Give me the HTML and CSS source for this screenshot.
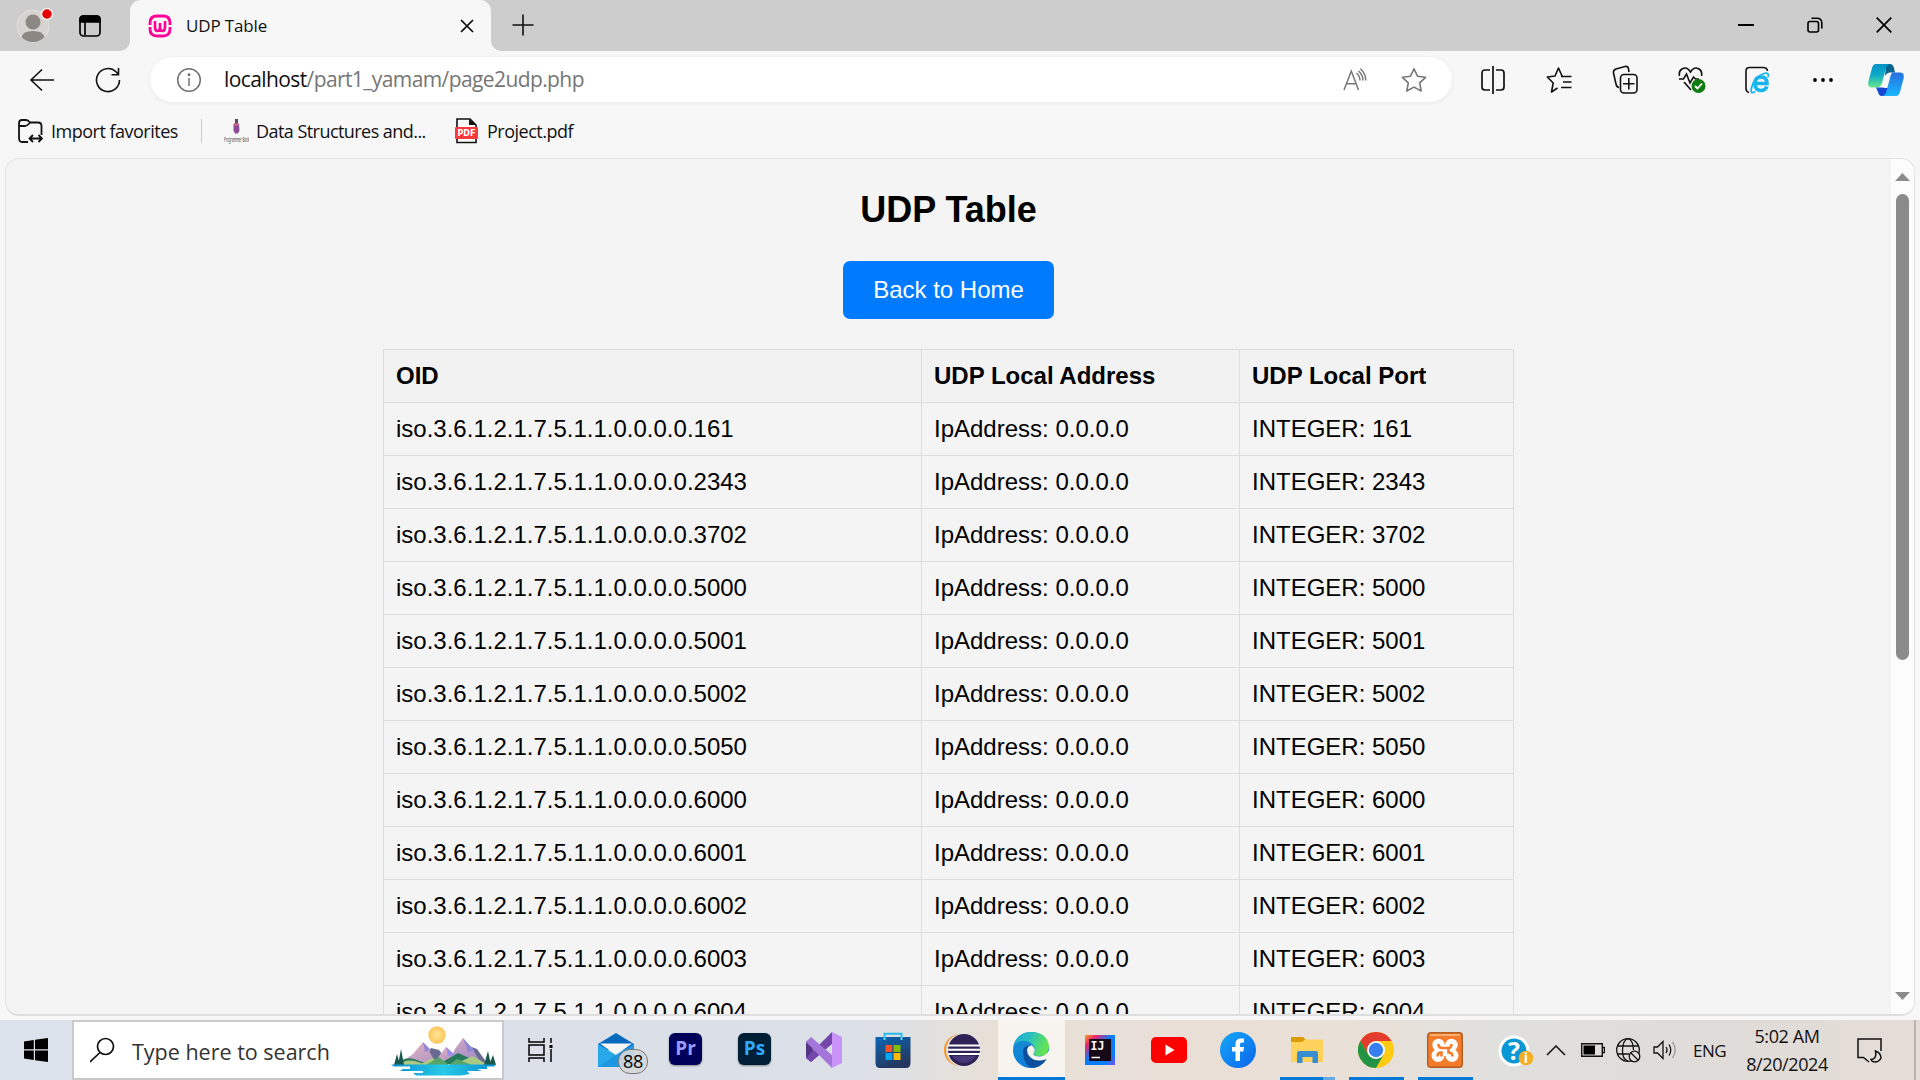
FILE: index.html
```html
<!DOCTYPE html>
<html lang="en">
<head>
<meta charset="utf-8">
<title>UDP Table</title>
<link rel="stylesheet" href="styles.css">
</head>
<body>
<div class="screen">
  <header class="titlebar">
    <div class="profile">
      <svg width="38" height="40" viewBox="0 0 38 40"><circle cx="17" cy="22" r="16" fill="#d6d4d0" stroke="#e4e2de"/><circle cx="17" cy="18" r="7.5" fill="#8b8884"/><path d="M5.500 33 Q7 27 17 27 Q27 27 28.500 33 Q24 38 17 38 Q10 38 5.500 33Z" fill="#8b8884"/><circle cx="31" cy="10" r="5.500" fill="#e60000" stroke="#eee" stroke-width="1.500"/></svg>
    </div>
    <div class="tab-actions">
      <svg width="24" height="24" viewBox="0 0 24 24" fill="none" stroke="#000" stroke-width="1.700"><rect x="2" y="2" width="20" height="20" rx="3.500"/><path d="M7 8V21"/><path d="M2 8V5Q2 2 5 2H19Q22 2 22 5V8Z" fill="#000"/></svg>
    </div>
    <div class="tab">
      <svg class="favicon" width="24" height="24" viewBox="0 0 24 24" fill="none" stroke="#f09" stroke-width="2.800"><path d="M2 11V9Q2 2 9 2H15Q22 2 22 9V11M22 13V15Q22 22 15 22H9Q2 22 2 15V13"/><path d="M7 7V13Q7 17 9.500 17Q12 17 12 13V9V13Q12 17 14.500 17Q17 17 17 13V7" stroke-width="2.600"/></svg>
      <span class="tab-title">UDP Table</span>
      <svg class="tab-close" width="14" height="14" viewBox="0 0 14 14" fill="none" stroke="#000" stroke-width="1.600"><path d="M1 1 13 13M13 1 1 13"/></svg>
    </div>
    <svg class="new-tab" width="22" height="22" viewBox="0 0 22 22" fill="none" stroke="#111" stroke-width="1.600"><path d="M11 0.500V21.500M0.500 11H21.500"/></svg>
    <div class="window-controls">
      <div><svg width="16" height="16" viewBox="0 0 16 16"><path d="M0 8H16" stroke="#000" stroke-width="2"/></svg></div>
      <div><svg width="16" height="16" viewBox="0 0 16 16" fill="none" stroke="#000" stroke-width="1.600"><rect x="1" y="4.500" width="10.500" height="10.500" rx="2"/><path d="M4.500 1.200H10Q14.800 1.200 14.800 6V11.500"/></svg></div>
      <div><svg width="16" height="16" viewBox="0 0 16 16" fill="none" stroke="#000" stroke-width="1.700"><path d="M.7 .7 15.300 15.300M15.300 .7 .7 15.300"/></svg></div>
    </div>
  </header>

  <nav class="toolbar">
    <div class="tool"><svg width="26" height="24" viewBox="0 0 26 24" fill="none" stroke="#111" stroke-width="1.600"><path d="M13 1.500 2 12 13 22.500M2 12H25"/></svg></div>
    <div class="tool"><svg width="26" height="26" viewBox="0 0 26 26" fill="none" stroke="#111" stroke-width="1.600"><path d="M24.500 13A11.500 11.500 0 1 1 21 4.800L23.500 7.500M23.500 1V7.800H16.500"/></svg></div>
    <div class="address">
      <svg class="info" width="26" height="26" viewBox="0 0 26 26" fill="none" stroke="#707070" stroke-width="1.500"><circle cx="13" cy="13" r="11.300"/><path d="M13 11V19"/><circle cx="13" cy="7.800" r=".7" fill="#707070"/></svg>
      <span class="url"><span class="host">localhost</span>/part1_yamam/page2udp.php</span>
      <svg class="read" width="24" height="24" viewBox="0 0 24 24" fill="none" stroke="#777" stroke-width="1.500"><path d="M1 22 8.300 3 15.500 22M3.500 15.800H13M13.500 5Q17 8 17 12.500M17.500 .8Q22.800 6 22.800 12.500M15.500 3Q20 7 20 12.500"/></svg>
      <svg class="star" width="26" height="26" viewBox="0 0 26 26" fill="none" stroke="#777" stroke-width="1.600" stroke-linejoin="round"><path d="M13 1.800 16.500 9.200 24.600 10.300 18.700 15.900 20.200 24 13 20.100 5.800 24 7.300 15.900 1.400 10.300 9.500 9.200Z"/></svg>
    </div>
    <div class="tools">
      <div class="tool"><svg width="24" height="28" viewBox="0 0 24 28" fill="none" stroke="#111" stroke-width="1.700"><path d="M9 4H4Q1 4 1 7V21Q1 24 4 24H9M15 4H20Q23 4 23 7V21Q23 24 20 24H15M12 0V28"/></svg></div>
      <div class="tool"><svg width="26" height="28" viewBox="0 0 26 28" fill="none" stroke="#111" stroke-width="1.600" stroke-linejoin="round"><path d="M17 10H16L12.500 2 9 10 1.300 11 7.200 17 5.500 26 11.500 22M15 10.500H25.500M17 16H25.500M15 21.500H25.500"/></svg></div>
      <div class="tool"><svg width="26" height="30" viewBox="0 0 26 30" fill="none" stroke="#111" stroke-width="1.600"><path d="M7 22.500Q4.500 22 4 19L1.500 8Q1 5 4 4L13 1.500Q16 1 16.500 4L17 7"/><rect x="8.500" y="9.500" width="16.500" height="18.500" rx="3.500"/><path d="M16.800 13V24.500M11 18.800H22.500"/></svg></div>
      <div class="tool health"><svg width="28" height="30" viewBox="0 0 28 30" fill="none" stroke="#111" stroke-width="1.600"><path d="M1.500 11Q.5 6 4 4Q9 1 12.500 7Q16 1 21 4Q24.500 6 23.500 11M6 17 13 25M1 14H5.500L8.500 9 12 18 15.500 12 17.500 14H21"/><circle cx="20.500" cy="21" r="7" fill="#107c10" stroke="none"/><path d="M17 21 19.500 23.500 24 18.500" stroke="#fff" stroke-width="1.800"/></svg></div>
      <div class="tool"><svg width="26" height="28" viewBox="0 0 26 28" fill="none"><path d="M5 26.500Q2 25.500 2 22.500V5Q2 1.500 5.500 1.500H19Q23 1.500 23.500 5" stroke="#111" stroke-width="1.600"/><path d="M23 20.500Q21 25 16.500 24.500Q11 24 11 17.500Q11 11 17 11Q23 11 23 17.500H12" stroke="#18b4ee" stroke-width="3.600"/><path d="M11 25.500Q6 29 7.500 22Q10 11 20 7.500Q25.500 6 24 11" stroke="#18b4ee" stroke-width="1.800"/></svg></div>
      <div class="tool"><svg width="20" height="6" viewBox="0 0 20 6"><circle cx="2" cy="3" r="1.900"/><circle cx="10" cy="3" r="1.900"/><circle cx="18" cy="3" r="1.900"/></svg></div>
      <div class="tool copilot"><svg width="36" height="34" viewBox="0 0 36 34"><defs><linearGradient id="cg" x1="0" y1="0" x2="0" y2="1"><stop offset="0" stop-color="#0793c8"/><stop offset=".45" stop-color="#09a9ca"/><stop offset="1" stop-color="#67e68c"/></linearGradient><linearGradient id="cb" x1="0" y1="0" x2="0" y2="1"><stop offset="0" stop-color="#2770df"/><stop offset="1" stop-color="#18b6fd"/></linearGradient></defs><path d="M18 1H22Q25 1 26 5L27 9.500H22Q19 9.500 17 13Z" fill="#0b6490"/><path d="M8 1H22Q19 1 18 5L14 20Q12.500 24.500 9 24.500H4Q-1 24.500 .5 18L4 5Q5 1 8 1Z" fill="url(#cg)"/><path d="M8 24.500H14L17 25H20L18.500 30Q17.500 33 15 33H13.500Q11 33 10 29Z" fill="#1746d4"/><path d="M25 9.500H32Q37 9.500 35.500 16L32 29Q31 33 28 33H14Q17 33 18.500 28L22.500 13Q23.500 9.500 25 9.500Z" fill="url(#cb)"/></svg></div>
    </div>
  </nav>

  <nav class="favorites">
    <svg class="import" width="25" height="26" viewBox="0 0 25 26" fill="none" stroke="#111" stroke-width="1.800"><path d="M10 24H4Q1 24 1 20V5Q1 2 4 2H8Q10 2 12 4.500H20Q23.500 4.500 23.500 8V17M1 8H7Q9 8 12 4.500M12 20.500H24M15 17 11.500 20.500 15 24M20.500 17 24 20.500 20.500 24"/></svg>
    <span class="import-label">Import favorites</span>
    <i class="separator"></i>
    <svg class="ds" width="25" height="26" viewBox="0 0 25 26"><path d="M12.500 1V5" stroke="#554a58" stroke-width="3"/><path d="M9.500 6Q12 3 15 6L15.500 12.500 14 15.500H11L9.500 12.500Z" fill="#8d4a97"/><path d="M10 6.500H15" stroke="#d76686" stroke-width="2"/><text transform="translate(0 23.500) scale(.42 1)" class="tiny-label">Programmer Books</text></svg>
    <span class="ds-label">Data Structures and...</span>
    <svg class="pdf" width="23" height="26" viewBox="0 0 23 26"><path d="M2 1H15L21 7V24.500H2Z" fill="#fff" stroke="#111" stroke-width="1.600"/><path d="M14 1V7H21Z" fill="#111"/><rect y="9" width="23" height="12" rx="1" fill="#f93b3e"/><text x="2.500" y="18.200" textLength="18" lengthAdjust="spacingAndGlyphs" class="pdf-label">PDF</text></svg>
    <span class="pdf-name">Project.pdf</span>
  </nav>

  <main class="viewport">
    <section class="page">
      <h2>UDP Table</h2>
      <a class="back">Back to Home</a>
      <table>
        <colgroup><col class="c-oid"><col class="c-addr"><col class="c-port"></colgroup>
        <tr><th>OID</th><th>UDP Local Address</th><th>UDP Local Port</th></tr>
        <tr><td>iso.3.6.1.2.1.7.5.1.1.0.0.0.0.161</td><td>IpAddress: 0.0.0.0</td><td>INTEGER: 161</td></tr>
        <tr><td>iso.3.6.1.2.1.7.5.1.1.0.0.0.0.2343</td><td>IpAddress: 0.0.0.0</td><td>INTEGER: 2343</td></tr>
        <tr><td>iso.3.6.1.2.1.7.5.1.1.0.0.0.0.3702</td><td>IpAddress: 0.0.0.0</td><td>INTEGER: 3702</td></tr>
        <tr><td>iso.3.6.1.2.1.7.5.1.1.0.0.0.0.5000</td><td>IpAddress: 0.0.0.0</td><td>INTEGER: 5000</td></tr>
        <tr><td>iso.3.6.1.2.1.7.5.1.1.0.0.0.0.5001</td><td>IpAddress: 0.0.0.0</td><td>INTEGER: 5001</td></tr>
        <tr><td>iso.3.6.1.2.1.7.5.1.1.0.0.0.0.5002</td><td>IpAddress: 0.0.0.0</td><td>INTEGER: 5002</td></tr>
        <tr><td>iso.3.6.1.2.1.7.5.1.1.0.0.0.0.5050</td><td>IpAddress: 0.0.0.0</td><td>INTEGER: 5050</td></tr>
        <tr><td>iso.3.6.1.2.1.7.5.1.1.0.0.0.0.6000</td><td>IpAddress: 0.0.0.0</td><td>INTEGER: 6000</td></tr>
        <tr><td>iso.3.6.1.2.1.7.5.1.1.0.0.0.0.6001</td><td>IpAddress: 0.0.0.0</td><td>INTEGER: 6001</td></tr>
        <tr><td>iso.3.6.1.2.1.7.5.1.1.0.0.0.0.6002</td><td>IpAddress: 0.0.0.0</td><td>INTEGER: 6002</td></tr>
        <tr><td>iso.3.6.1.2.1.7.5.1.1.0.0.0.0.6003</td><td>IpAddress: 0.0.0.0</td><td>INTEGER: 6003</td></tr>
        <tr><td>iso.3.6.1.2.1.7.5.1.1.0.0.0.0.6004</td><td>IpAddress: 0.0.0.0</td><td>INTEGER: 6004</td></tr>
      </table>
    </section>
    <aside class="scrollbar">
      <svg width="15" height="8" viewBox="0 0 15 8"><path d="M7.500 0 15 8H0Z" fill="#8b8b8b"/></svg>
      <div class="thumb"></div>
      <svg class="down" width="15" height="8" viewBox="0 0 15 8"><path d="M0 0H15L7.500 8Z" fill="#8b8b8b"/></svg>
    </aside>
  </main>

  <footer class="taskbar">
    <div class="start"><svg width="24" height="24" viewBox="0 0 24 24"><path d="M0 3.400 9.800 2V11.300H0ZM11 1.800 24 0V11.300H11ZM0 12.500H9.800V22L0 20.600ZM11 12.500H24V24L11 22.200Z"/></svg></div>
    <div class="search">
      <svg width="26" height="26" viewBox="0 0 26 26" fill="none" stroke="#111" stroke-width="1.700"><circle cx="15.500" cy="9.500" r="8"/><path d="M10 15.500 0 25"/></svg>
      <span>Type here to search</span>
      <svg class="landscape" width="106" height="52" viewBox="0 0 106 52">
        <defs><radialGradient id="sun"><stop offset="0" stop-color="#ffe597"/><stop offset="1" stop-color="#fdc65b"/></radialGradient><linearGradient id="mtn" x1="0" y1="0" x2="1" y2="1"><stop offset="0" stop-color="#e9b7c1"/><stop offset="1" stop-color="#9e8ac5"/></linearGradient><linearGradient id="lake" x1="0" x2="1"><stop stop-color="#0b91d5"/><stop offset=".5" stop-color="#27c9e5"/><stop offset="1" stop-color="#0b8ed3"/></linearGradient></defs>
        <circle cx="46" cy="10" r="8.700" fill="url(#sun)"/>
        <path d="M32 38 40 23 48 25 58 38ZM70 38 78 21 86 24 96 38Z" fill="#696a91"/>
        <path d="M12 36 22 29 32 17 38 26 45 38ZM58 37 64 24 72 13 82 25 90 38H56Z" fill="url(#mtn)"/>
        <path d="M32 17 40 25 34 27ZM72 13 84 26 77 27Z" fill="#9188d8"/>
        <path d="M42 39 55 22 64 30 70 39Z" fill="url(#mtn)"/><path d="M55 22 64 30 57 31Z" fill="#9b8bed"/>
        <path d="M6 39Q14 31 23 34L37 39ZM48 39 67 28 78 33 88 39Z" fill="#267a5c"/>
        <path d="M7 40Q18 31 34 40ZM28 40 41 33 53 40ZM61 40 82 31 97 40Z" fill="#a9c985"/><path d="M35 40 48 32 58 40ZM58 40 66 34 81 40Z" fill="#56a56b"/>
        <path d="M3 40 6 29 9 40ZM7 40 10 24 13 40ZM93 40 97 26 100 40ZM98 40 102 30 105 40Z" fill="#17584f"/>
        <path d="M0 39.500H105L103 41.500H96V44H86L91 46H76L79 49 70 50.500H25L22 48H32V46H9L12 44H19V41.500H3Z" fill="url(#lake)"/>
      </svg>
    </div>
    <div class="taskview"><svg width="25" height="24" viewBox="0 0 25 24" fill="none" stroke="#000" stroke-width="1.500"><path d="M1 0V4H16V0M1 24V20H16V24M1 7H16V17H1ZM23 0V5M23 11V24"/><rect x="21.500" y="7" width="3" height="3" fill="#000" stroke="none"/></svg></div>
    <div class="apps">
      <div class="app mail"><svg width="36" height="34" viewBox="0 0 36 34"><path d="M0 11 18 0 36 11 33 17H3Z" fill="#0969bd"/><path d="M0 11 18 22 36 11V34H0Z" fill="#28a8e8"/><path d="M2 10.500H34L18 22Z" fill="#f6f6f6"/><path d="M0 34 25 17 36 11V34Z" fill="#168cda" opacity=".6"/></svg><b class="badge">88</b></div>
      <div class="app"><div class="adobe pr">Pr</div></div>
      <div class="app"><div class="adobe ps">Ps</div></div>
      <div class="app"><svg width="36" height="36" viewBox="0 0 36 36"><path d="M0 10 5 6 13 13 7 18 13 23 5 30 0 26Z" fill="#65459d"/><path d="M26 0V12L5 30 0 26Z" fill="#7547aa"/><path d="M0 10 5 5 26 23V36Z" fill="#a476d7"/><path d="M26 0 36 5V31L26 36Z" fill="#ca93fa"/><path d="M0 11V25L6 20V16Z" fill="#543483"/></svg></div>
      <div class="app"><svg width="36" height="36" viewBox="0 0 36 36"><defs><linearGradient id="store" x2=".5" y2="1"><stop stop-color="#0967b5"/><stop offset="1" stop-color="#25375e"/></linearGradient></defs><path d="M9.500 8V1.800H26.500V8" fill="none" stroke="#28b9ed" stroke-width="2"/><path d="M.5 5H35.500V31Q35.500 36 31 36H5Q.5 36 .5 31Z" fill="url(#store)"/><path d="M9.500 8V5M26.500 8V5" stroke="#52dcff" stroke-width="2"/><path fill="#f35325" d="M10.500 13H17.300V20H10.500Z"/><path fill="#81bc06" d="M18.500 13H25.500V20H18.500Z"/><path fill="#05a6f0" d="M10.500 21H17.300V28H10.500Z"/><path fill="#ffba08" d="M18.500 21H25.500V28H18.500Z"/></svg></div>
      <div class="app"><svg width="36" height="34" viewBox="0 0 36 34"><circle cx="16" cy="17" r="16" fill="#f7941e"/><circle cx="18.500" cy="17" r="16.500" fill="#e7dfdb"/><circle cx="20" cy="17" r="16" fill="#2c2255"/><path d="M4 12.500H36M4 16.800H36M4 21H36" stroke="#fff" stroke-width="1.900"/><path d="M8 23H32Q27 30 20 30Q13 30 8 23Z" fill="#473779"/></svg></div>
      <div class="app active"><svg width="36" height="36" viewBox="0 0 36 36"><defs><linearGradient id="eg" y2=".3"><stop stop-color="#1ca7d5"/><stop offset=".5" stop-color="#2ac2bf"/><stop offset="1" stop-color="#64e451"/></linearGradient><linearGradient id="eb" y1="0" x2=".3" y2="1"><stop stop-color="#1c8fd0"/><stop offset="1" stop-color="#0a7edb"/></linearGradient></defs><circle cx="18" cy="18" r="18" fill="url(#eb)"/><path d="M10 20Q10 13 18 13Q13 19 18 25Q24 30 33 27.500Q28 36 18 36Q10 31 10 20Z" fill="#0d4f9f"/><path d="M.3 14Q4 0 18 0Q34 0 36 14Q36 24 27 24Q21 24 20 22Q24 18 20 13Q15 8 8 9Q3 10 .3 14Z" fill="url(#eg)"/><path d="M14 18Q15 13 19 13.500Q24 18 20 22Q21 24.500 27 24.500Q33 24 36.500 18V27H33.500Q23 31 17 25Q14 22 14 18Z" fill="#f7f3ef"/></svg></div>
      <div class="app"><svg width="30" height="30" viewBox="0 0 30 30"><defs><linearGradient id="ij" x2="1" y2="1"><stop stop-color="#fca51c"/><stop offset=".2" stop-color="#ed2470"/><stop offset=".45" stop-color="#087cfa"/><stop offset=".8" stop-color="#087cfa"/><stop offset="1" stop-color="#7b51e8"/></linearGradient></defs><path fill="url(#ij)" d="M0 0H30V30H0Z"/><path d="M4 4H26V26H4Z" fill="#160817"/><path d="M6.500 22.500H15" stroke="#fff" stroke-width="1.500"/><text x="5.500" y="15" class="ij-label">IJ</text></svg></div>
      <div class="app"><svg width="36" height="26" viewBox="0 0 36 26"><rect width="36" height="26" rx="5" fill="#f00"/><path d="M14.500 7.500V18.500L23.500 13Z" fill="#fff"/></svg></div>
      <div class="app"><svg width="36" height="36" viewBox="0 0 36 36"><defs><linearGradient id="fb" x2="1" y2="1"><stop stop-color="#18a9f7"/><stop offset="1" stop-color="#0864ec"/></linearGradient></defs><circle cx="18" cy="18" r="18" fill="url(#fb)"/><path d="M15.500 29V19.500H12V15H15.500V12Q15.500 6.500 21 6.500H24V10.500H22Q20 10.500 20 12.500V15H24L23.300 19.500H20V29Z" fill="#fff"/></svg></div>
      <div class="app running grouped"><svg width="34" height="28" viewBox="0 0 34 28"><path d="M1 2Q1 1 2 1H13L16 4V8H1Z" fill="#dc9b08"/><path d="M1 6H12L15 3.500H33V26H1Z" fill="#ffd25c"/><path d="M7 27V17Q7 15 9 15H26Q28 15 28 17V27H22.500V21H12.500V27Z" fill="#378ed2"/></svg></div>
      <div class="app running"><svg width="36" height="36" viewBox="0 0 36 36"><circle cx="18" cy="18" r="18" fill="#ffcc13"/><path d="M2.400 9A18 18 0 0 1 33.600 9H18L10 22.500Z" fill="#e33b2e"/><path d="M2.400 9A18 18 0 0 0 18 36L25.800 22.500H10.200Z" fill="#239345"/><circle cx="18" cy="18" r="9" fill="#fff"/><circle cx="18" cy="18" r="7.200" fill="#377ff0"/></svg></div>
      <div class="app running"><svg width="36" height="36" viewBox="0 0 36 36"><rect x=".7" y=".7" width="34.600" height="34.600" rx="3" fill="#f47b29" stroke="#b45d22" stroke-width="1.400"/><path d="M3 2H33V4H3Z" fill="#ffad71"/><g fill="#fff"><circle cx="11.500" cy="13" r="6.200"/><circle cx="24.500" cy="13" r="6.200"/><circle cx="11" cy="23.500" r="6.500"/><circle cx="25" cy="23.500" r="6.500"/><path d="M11 13H25V24H11Z"/></g><path d="M11.500 12Q11.500 16 15 16H21Q24.500 16 24.500 12M10.500 24.500Q10.500 20.500 14.500 20.500V24.500M21.500 16V20.500Q25.500 20.500 25.500 24.500" fill="none" stroke="#f47b29" stroke-width="2.600"/></svg></div>
    </div>
    <div class="tray">
      <svg class="help" width="36" height="34" viewBox="0 0 36 34"><circle cx="16" cy="16" r="15.500" fill="#fff"/><circle cx="16" cy="16" r="12.500" fill="#0997d5"/><text x="16" y="25" text-anchor="middle" class="help-mark">?</text><circle cx="28" cy="23" r="7.300" fill="#f5ae22"/><text x="28" y="28" text-anchor="middle" class="info-mark">i</text></svg>
      <svg class="chevron" width="20" height="11" viewBox="0 0 20 11" fill="none" stroke="#111" stroke-width="1.500"><path d="M1 10 10 1 19 10"/></svg>
      <svg class="battery" width="24" height="14" viewBox="0 0 24 14"><path d="M.7 .7H21.300V13.300H.7ZM22 4.500H23.500V9.500H22" fill="none" stroke="#111" stroke-width="1.400"/><path d="M2.500 2.500H14V11.500H2.500Z"/></svg>
      <svg class="globe" width="25" height="25" viewBox="0 0 25 25" fill="none" stroke="#111" stroke-width="1.300"><circle cx="12" cy="12" r="11.300"/><path d="M1 8H23M1 16H13M12 23Q6 21 6.500 12Q7 2 12 .7Q17 2 17.500 12"/><circle cx="18.500" cy="18.500" r="5.300" fill="#dfddda"/><path d="M15 15 22 22"/></svg>
      <svg class="speaker" width="24" height="20" viewBox="0 0 24 20" fill="none" stroke="#111" stroke-width="1.300"><path d="M1 7H4.500L10 1.500V18.500L4.500 13H1ZM13 7Q15 10 13 13M16 4.500Q19.500 10 16 15.500"/><path d="M19.500 2Q25 10 19.500 18" stroke="#999"/></svg>
      <span class="lang">ENG</span>
      <div class="clock"><span>5:02 AM</span><span>8/20/2024</span></div>
      <svg class="notice" width="25" height="25" viewBox="0 0 25 25" fill="none" stroke="#111" stroke-width="1.500"><path d="M12 24 6.500 19.500H1V1H24V13"/><path d="M18.500 13Q24 15 24 20Q22 24 18 24Q15 24 14 21.500Q20 21 18.500 13Z"/></svg>
    </div>
  </footer>
</div>
</body>
</html>
```
FILE: styles.css
```css
* { box-sizing: border-box; }
body { margin: 0; overflow: hidden; font-family: "Open Sans", "Noto Sans", sans-serif; color: #111; }
svg { display: block; flex: none; }
.screen { width: 1920px; height: 1080px; display: grid; grid-template-rows: 51px 58px 49px 862px 60px; background: #f7f7f7; overflow: hidden; white-space: nowrap; }

.titlebar { display: flex; background: #cdcdcd; }
.profile { width: 66px; padding: 4px 0 0 16px; }
.tab-actions { width: 64px; padding: 14px 0 0 12px; }
.tab { position: relative; width: 361px; height: 51px; display: flex; align-items: center; padding: 0 17px 0 18px; background: #f7f7f7; border-radius: 11px 11px 0 0; }
.tab::before, .tab::after { content: ""; position: absolute; bottom: 0; width: 10px; height: 10px; }
.tab::before { left: -10px; background: radial-gradient(circle at 0 0, transparent 9.5px, #f7f7f7 10px); }
.tab::after { right: -10px; background: radial-gradient(circle at 100% 0, transparent 9.5px, #f7f7f7 10px); }
.tab-title { margin-left: 14px; font-size: 17px; letter-spacing: -0.15px; }
.tab-close { margin-left: auto; }
.new-tab { margin: 14px 0 0 21px; }
.window-controls { display: flex; align-items: center; margin: 0 4px 1px auto; }
.window-controls div { width: 69px; display: flex; justify-content: center; }

.toolbar { display: flex; align-items: center; padding: 0 0 1px 9px; }
.tool { width: 66px; display: flex; justify-content: center; }
.health { padding-left: 2px; }
.copilot { padding-right: 6px; }
.address { width: 1302px; height: 45px; display: flex; align-items: center; margin-left: 9px; padding-left: 26px; background: #fff; border-radius: 23px; box-shadow: 0 1px 4px #0001; }
.url { margin-left: 22px; margin-top: -1px; font-size: 21px; letter-spacing: -0.6px; color: #767676; }
.host { color: #111; }
.read { margin-left: auto; }
.star { margin: 0 25px 0 34px; }
.tools { display: flex; align-items: center; margin-left: 8px; }

.favorites { display: flex; align-items: center; padding: 0 0 5px 18px; font-size: 18px; }
.import-label { width: 141px; margin-left: 8px; letter-spacing: -0.5px; }
.separator { width: 1px; height: 24px; margin-left: 9px; background: #ccc; }
.ds { margin-left: 22px; }
.ds-label { width: 199px; margin-left: 7px; letter-spacing: -0.55px; }
.pdf-name { margin-left: 9px; letter-spacing: -0.5px; }
.tiny-label { font: 7px "Noto Sans", sans-serif; fill: #444; }
.pdf-label { font: bold 8px "DejaVu Sans", sans-serif; fill: #fff; }

.viewport { width: 1910px; height: 858px; margin-left: 5px; display: flex; background: #f4f4f4; border: 1px solid #e4e4e4; border-bottom: 2px solid #dedede; border-radius: 14px; overflow: hidden; font-family: "Liberation Sans", Arial, sans-serif; color: #000; }
.page { width: 1885px; display: flex; flex-direction: column; align-items: center; }
h2 { margin: 30px 0 31px; font-size: 36px; line-height: 41px; }
.back { width: 211px; height: 58px; flex: none; background: #007bff; color: #fff; border-radius: 7px; font-size: 24px; line-height: 58px; text-align: center; }
table { width: 1131px; margin-top: 30px; table-layout: fixed; border-collapse: collapse; font-size: 24px; line-height: 27px; }
.c-oid { width: 538px; }
.c-addr { width: 318px; }
.c-port { width: 274px; }
th, td { height: 53px; padding: 0 12px 1px; border: 1px solid #ddd; text-align: left; }
th { background: #f2f2f2; }
.scrollbar { width: 23px; display: flex; flex-direction: column; align-items: center; padding: 14px 0 14px; background: #fcfcfc; }
.thumb { width: 13px; height: 466px; margin-top: 13px; background: #8b8b8b; border-radius: 7px; }
.down { margin-top: auto; }

.taskbar { display: flex; background: linear-gradient(90deg, #dce2ec 0, #dbe0e9 30%, #dce0e7 45%, #e9e0d4 53%, #e8dfd9 58%, #eadfd6 62%, #e9e0d7 70%, #e0e0de 78%, #dfdcd9 87%, #e4dcd7 100%); }
.start { width: 72px; display: flex; align-items: center; justify-content: center; }
.search { width: 432px; height: 60px; display: flex; align-items: center; padding-left: 16px; background: #fff; border: 2px solid #c9c9c9; }
.search span { width: 242px; margin-left: 16px; padding-top: 3px; font-size: 21.5px; color: #333; }
.landscape { margin: 2px 0 0 17px; }
.taskview { width: 78px; padding: 18px 0 0 24px; }
.apps { display: flex; }
.app { position: relative; width: 69px; display: flex; align-items: center; justify-content: center; }
.mail svg { margin-right: 2px; }
.active { background: linear-gradient(#f7f3ef, #f7f3ef) 2px 0 / 67px 100% no-repeat; }
.active::after { content: ""; position: absolute; left: 2px; right: 0; bottom: 0; height: 3px; background: #0078d7; }
.running::after { content: ""; position: absolute; left: 8px; right: 6px; bottom: 0; height: 3px; background: #0078d7; }
.grouped::after { background: linear-gradient(90deg, #0078d7 43px, #66a9e2 43px); }
.adobe { width: 33px; height: 32px; margin-bottom: 3px; border-radius: 6px; text-align: center; font: bold 19px/30px "Open Sans", sans-serif; box-shadow: 0 1px 2px #0006; }
.pr { background: #00005b; color: #9999ff; }
.ps { background: #001e36; color: #31a8ff; }
.badge { position: absolute; left: 36px; top: 29px; width: 30px; height: 25px; border: 1px solid #777; border-radius: 12px; background: #d4d7dbe8; font: 18px/23px "Open Sans", sans-serif; letter-spacing: -0.4px; text-align: center; color: #000; }
.ij-label { font: bold 11.5px "DejaVu Sans Mono", monospace; fill: #fff; }

.tray { display: flex; align-items: center; padding-left: 19px; flex: 1; background: linear-gradient(#b9b4b0, #b9b4b0) right 6px top 0 / 2px 100% no-repeat; }
.help { margin: 4px 0 0; }
.help-mark { font: bold 25px "Open Sans", sans-serif; fill: #fff; }
.info-mark { font: bold 14px "Open Sans", sans-serif; fill: #fff; }
.chevron { margin-left: 12px; }
.battery { margin-left: 15px; }
.globe { margin-left: 11px; }
.speaker { margin-left: 12px; }
.lang { width: 34px; margin-left: 16px; font-size: 17px; letter-spacing: -0.5px; }
.clock { width: 104px; margin-left: 8px; display: flex; flex-direction: column; align-items: center; font-size: 18px; line-height: 28px; letter-spacing: -0.4px; }
.notice { margin-left: 18px; }
```
